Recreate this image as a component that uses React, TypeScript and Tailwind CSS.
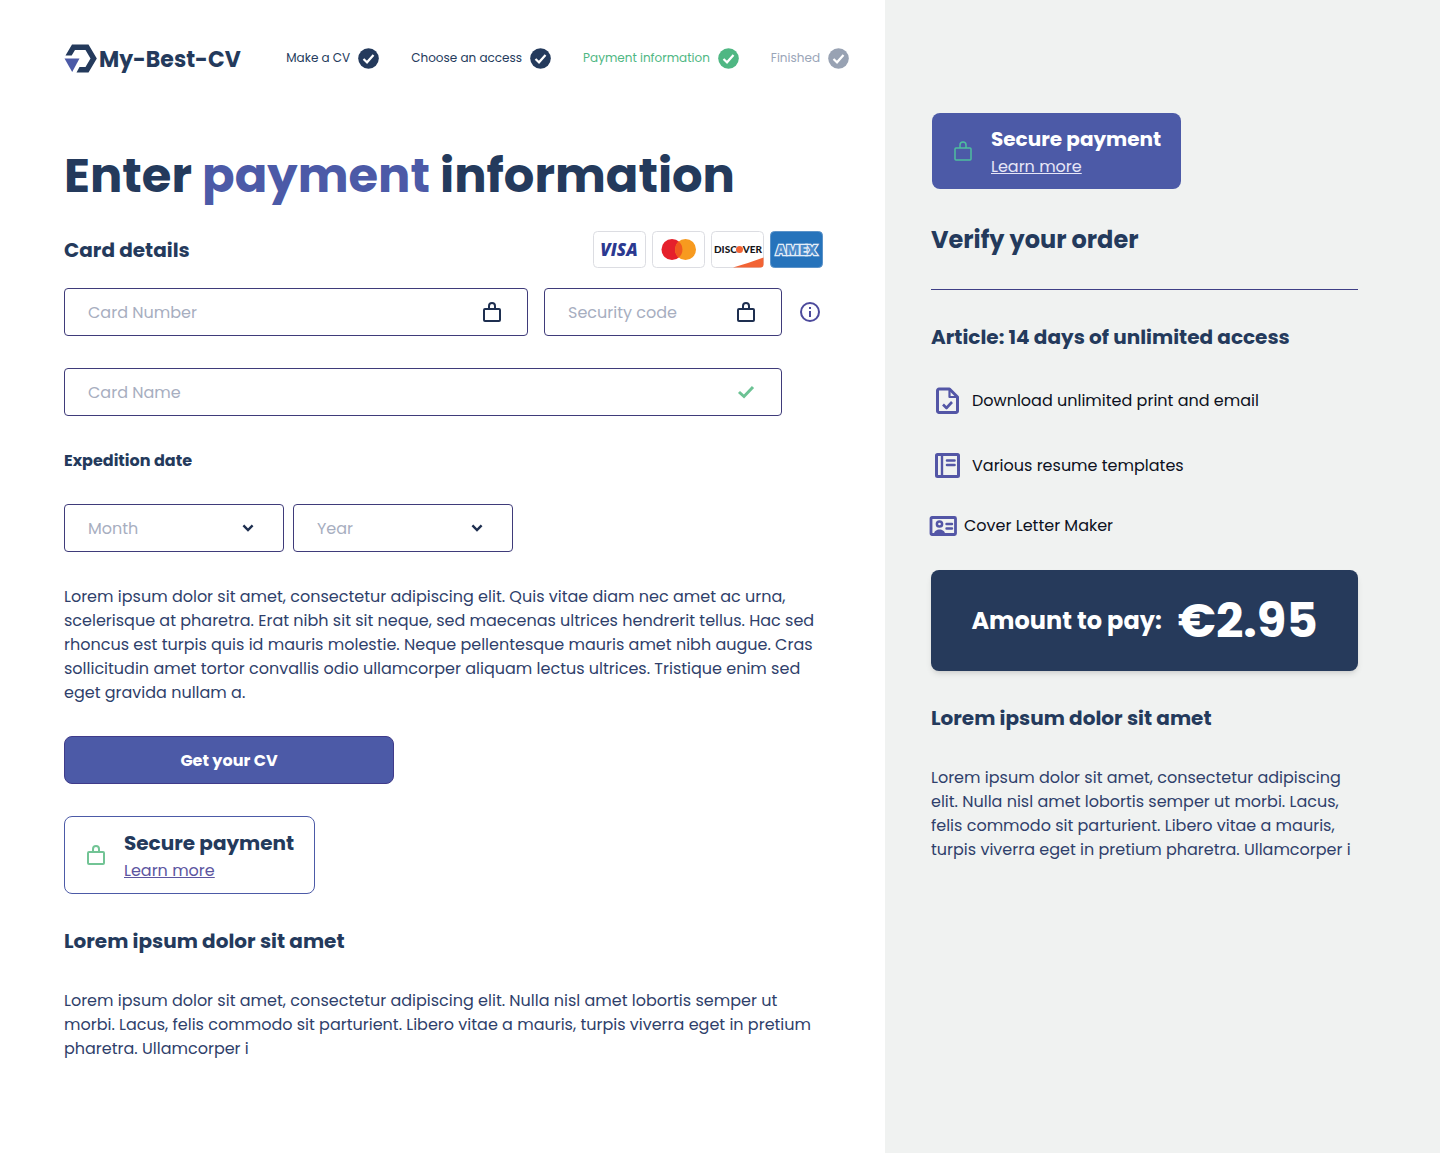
import React from "react";

const steps = [
  { label: "Make a CV", text: "text-[#243a5c]", icon: "text-[#243a5c]" },
  { label: "Choose an access", text: "text-[#243a5c]", icon: "text-[#243a5c]" },
  { label: "Payment information", text: "text-[#4fb783]", icon: "text-[#4fb783]" },
  { label: "Finished", text: "text-[#9aa5b8]", icon: "text-[#98a2b3]" },
];

const LockIcon: React.FC<{ className?: string; strokeWidth?: number }> = ({
  className = "",
  strokeWidth = 2,
}) => (
  <svg
    width="24"
    height="24"
    viewBox="0 0 24 24"
    fill="none"
    stroke="currentColor"
    strokeWidth={strokeWidth}
    strokeLinejoin="round"
    className={`shrink-0 ${className}`}
    aria-hidden="true"
  >
    <rect x="4" y="9" width="16" height="12" rx="1" />
    <path d="M9 9V6a3 3 0 0 1 6 0v3" />
  </svg>
);

const StepCheck: React.FC<{ className: string }> = ({ className }) => (
  <svg width="21" height="21" viewBox="0 0 21 21" className={`shrink-0 ${className}`} aria-hidden="true">
    <circle cx="10.5" cy="10.5" r="10.3" fill="currentColor" />
    <path d="M5.500 11l3.500 3.300L15.500 7" fill="none" stroke="#fff" strokeWidth="2.2" />
  </svg>
);

const Chevron: React.FC = () => (
  <svg
    width="12"
    height="8"
    viewBox="0 0 12 8"
    fill="none"
    stroke="#1e2f50"
    strokeWidth="2.4"
    className="pointer-events-none absolute right-[30px] top-5"
    aria-hidden="true"
  >
    <path d="M1.400 1.400L6 6l4.600-4.600" />
  </svg>
);

const Header: React.FC = () => (
  <header className="flex items-center justify-between pl-16 pr-9 pt-10">
    {/* Logo */}
    <a href="#" className="flex items-center gap-0.5">
      <svg width="33" height="29" viewBox="0 0 33 29" aria-hidden="true">
        <path
          d="M1.500 11.500L8 0.500H24.500L32.800 14.500L24.500 28.500H12.500L15.500 23H21.500L26.500 14.500L21.500 6H11L7.700 11.500Z"
          fill="#243a5c"
        />
        <path d="M.500 14.500H15.500L8.200 28Z" fill="#4c5aa7" />
      </svg>
      <span className="pt-1 text-[22px] leading-8 font-bold text-[#243a5c]">My-Best-CV</span>
    </a>

    {/* Progress */}
    <ol className="flex items-center gap-8">
      {steps.map((step) => (
        <li key={step.label} className="flex items-center gap-2 text-xs">
          <span className={step.text}>{step.label}</span>
          <StepCheck className={step.icon} />
        </li>
      ))}
    </ol>
  </header>
);

const CardLogos: React.FC = () => (
  <div className="flex gap-1.5">
    {/* Visa */}
    <svg width="53" height="37" viewBox="0 0 53 37" role="img" aria-label="Visa">
      <rect x=".5" y=".5" width="52" height="36" rx="4" fill="#fff" stroke="#dcdde2" />
      <text x="26" y="25" textAnchor="middle" fontFamily="Open Sans, sans-serif" fontSize="17" fontWeight="800" fontStyle="italic" fill="#2b3990">
        VISA
      </text>
    </svg>
    {/* Mastercard */}
    <svg width="53" height="37" viewBox="0 0 53 37" role="img" aria-label="Mastercard">
      <rect x=".5" y=".5" width="52" height="36" rx="4" fill="#fff" stroke="#dcdde2" />
      <circle cx="20" cy="18.500" r="10.500" fill="#e5202b" />
      <circle cx="33.500" cy="18.500" r="10.500" fill="#f79a1f" />
      <path d="M26.750 10.500a10.500 10.500 0 0 1 0 16a10.500 10.500 0 0 1 0-16Z" fill="#f0591f" />
    </svg>
    {/* Discover */}
    <svg width="53" height="37" viewBox="0 0 53 37" role="img" aria-label="Discover">
      <rect x=".5" y=".5" width="52" height="36" rx="4" fill="#fff" stroke="#dcdde2" />
      <path d="M22 36.500Q38 32 52.500 26.500V33.500a3 3 0 0 1-3 3Z" fill="#f26334" />
      <g fontFamily="Lato, sans-serif" fontSize="10" fontWeight="900" fill="#16161a">
        <text x="3" y="22">DISC</text>
        <text x="51" y="22" textAnchor="end">VER</text>
      </g>
      <circle cx="28.500" cy="18.500" r="3.500" fill="#f26334" />
    </svg>
    {/* American Express */}
    <svg width="53" height="37" viewBox="0 0 53 37" role="img" aria-label="American Express">
      <rect x=".5" y=".5" width="52" height="36" rx="4" fill="#2673bb" stroke="#5c93c9" />
      <text
        x="26.500"
        y="23.500"
        textAnchor="middle"
        fontFamily="Open Sans, sans-serif"
        fontSize="14"
        fontWeight="800"
        fill="#4b8aca"
        stroke="#e4eef8"
        strokeWidth="2.500"
        paintOrder="stroke"
      >
        AMEX
      </text>
    </svg>
  </div>
);

const SecureBox: React.FC<{ filled?: boolean }> = ({ filled }) => (
  <div
    className={`flex w-fit items-center gap-4 rounded-lg py-[11px] pr-5 pl-[19px] ${
      filled ? "ml-px bg-[#4c5aa7] text-white" : "border border-[#4c5aa7] text-[#243a5c]"
    }`}
  >
    <LockIcon className={filled ? "text-[#4dbf9f]" : "text-[#72c495]"} strokeWidth={filled ? 1.5 : 2} />
    <div>
      <p className="text-xl leading-[30px] font-bold">Secure payment</p>
      <a
        href="#"
        className={`block pt-0.5 text-base leading-[22px] underline ${filled ? "text-[#e6e6f7]" : "text-[#5c55a0]"}`}
      >
        Learn more
      </a>
    </div>
  </div>
);

const field = "flex h-12 items-center rounded border border-[#3f3b7a] px-[23px]";
const input = "w-full min-w-0 bg-transparent pt-0.5 text-base text-[#243a5c] outline-none placeholder:text-[#a7aebf]";
const select =
  "h-12 w-full appearance-none rounded border border-[#3f3b7a] bg-white pt-0.5 pl-[23px] text-base text-[#a7aebf]";

const PaymentForm: React.FC = () => (
  <form>
    <div className="mt-[19px] flex items-center justify-between">
      <h2 className="text-xl font-bold">Card details</h2>
      <CardLogos />
    </div>

    {/* Card fields */}
    <div className="mt-5 grid grid-cols-[464fr_238fr_25px] gap-x-4 gap-y-8">
      <label className={field}>
        <input className={input} type="text" placeholder="Card Number" aria-label="Card Number" />
        <LockIcon className="text-[#1e2f50]" />
      </label>
      <label className={field}>
        <input className={input} type="text" placeholder="Security code" aria-label="Security code" />
        <LockIcon className="text-[#1e2f50]" />
      </label>
      <button type="button" aria-label="About the security code" className="flex items-center pl-px">
        <svg width="22" height="22" viewBox="0 0 22 22" fill="none" stroke="#4c4a9c" strokeWidth="2">
          <circle cx="11" cy="11" r="9" />
          <path d="M11 10v6M11 6v2" />
        </svg>
      </button>
      <label className={`${field} col-span-2`}>
        <input className={input} type="text" placeholder="Card Name" aria-label="Card Name" />
        <svg width="24" height="24" viewBox="0 0 24 24" fill="none" stroke="#6cc294" strokeWidth="3" className="shrink-0" aria-hidden="true">
          <path d="M5 12l5 4.500L19 7" />
        </svg>
      </label>
    </div>

    {/* Expiry */}
    <h3 className="mt-[33px] text-base leading-6 font-bold">Expedition date</h3>
    <div className="mt-[31px] flex gap-[9px]">
      <div className="relative w-[220px]">
        <select className={select} aria-label="Month">
          <option>Month</option>
        </select>
        <Chevron />
      </div>
      <div className="relative w-[220px]">
        <select className={select} aria-label="Year">
          <option>Year</option>
        </select>
        <Chevron />
      </div>
    </div>

    <p className="mt-[33px] text-base leading-6 text-[#2f3f6b]">
      Lorem ipsum dolor sit amet, consectetur adipiscing elit. Quis vitae diam nec amet ac urna, scelerisque at
      pharetra. Erat nibh sit sit neque, sed maecenas ultrices hendrerit tellus. Hac sed rhoncus est turpis quis id
      mauris molestie. Neque pellentesque mauris amet nibh augue. Cras sollicitudin amet tortor convallis odio
      ullamcorper aliquam lectus ultrices. Tristique enim sed eget gravida nullam a.
    </p>

    <button
      type="submit"
      className="mt-[31px] h-12 w-[330px] rounded-lg border border-[#3f3b8a] bg-[#4c5aa7] pt-0.5 text-base font-bold text-white"
    >
      Get your CV
    </button>
  </form>
);

const Summary: React.FC = () => (
  <aside className="bg-[#f0f2f1] pt-[113px] pr-[82px] pl-[46px] text-[#243a5c]">
    <SecureBox filled />
    <h2 className="mt-[33px] border-b border-[#3f3f86] pb-[31px] text-2xl leading-9 font-bold">Verify your order</h2>
    <h3 className="mt-8 text-xl leading-[30px] font-bold">Article: 14 days of unlimited access</h3>

    {/* What is included */}
    <ul className="mt-8 text-base text-[#0c1020]">
      <li className="flex h-[33px] items-center gap-3">
        <svg width="29" height="30" viewBox="0 0 29 30" fill="none" stroke="#5356a6" strokeWidth="3" strokeLinejoin="round" aria-hidden="true">
          <path d="M18.500 3H8a1.500 1.500 0 0 0-1.500 1.500V25A1.500 1.500 0 0 0 8 26.500H25A1.500 1.500 0 0 0 26.500 25V11Z" />
          <path d="M18.500 3V11H26.500" strokeWidth="2.200" />
          <path d="M12 18.500l3.500 3.500 5.500-6" strokeWidth="2.600" />
        </svg>
        Download unlimited print and email
      </li>
      <li className="mt-8 flex h-[33px] items-center gap-3">
        <svg width="29" height="28" viewBox="0 0 29 28" fill="none" stroke="#5356a6" strokeWidth="3" strokeLinejoin="round" aria-hidden="true">
          <rect x="5.500" y="2.500" width="22" height="22" rx="1" />
          <path d="M11 3v22" strokeWidth="2.400" />
          <path d="M16 8.500h7.500M16 13h7.500" strokeWidth="2.600" strokeLinecap="round" />
        </svg>
        Various resume templates
      </li>
      <li className="mt-7 flex h-8 items-center gap-[7px]">
        <svg width="26" height="22" viewBox="0 0 26 22" className="overflow-visible" fill="none" stroke="#5356a6" strokeWidth="2.800" strokeLinejoin="round" aria-hidden="true">
          <rect x="0" y="2.500" width="24.500" height="17" rx="1" />
          <circle cx="8.500" cy="9" r="2.600" strokeWidth="2.500" />
          <path d="M3 19c0-6 11-6 11 0Z" fill="#5356a6" stroke="none" />
          <path d="M15.500 9H21M15.500 13.500H21" strokeWidth="2.400" strokeLinecap="round" />
        </svg>
        Cover Letter Maker
      </li>
    </ul>

    {/* Total */}
    <div className="mt-7 flex h-[101px] items-center justify-center gap-4 rounded-lg bg-[#263a5b] whitespace-nowrap text-white shadow-md">
      <span className="text-2xl font-bold">Amount to pay:</span>
      <strong className="text-5xl font-bold">€2.95</strong>
    </div>

    <h3 className="mt-8 text-xl leading-[30px] font-bold">Lorem ipsum dolor sit amet</h3>
    <p className="mt-[33px] text-base leading-6 text-[#2f3f6b]">
      Lorem ipsum dolor sit amet, consectetur adipiscing elit. Nulla nisl amet lobortis semper ut morbi. Lacus, felis
      commodo sit parturient. Libero vitae a mauris, turpis viverra eget in pretium pharetra. Ullamcorper i
    </p>
  </aside>
);

const App: React.FC = () => {
  return (
    <div className="grid min-h-screen grid-cols-[885fr_555fr] bg-white font-['Poppins','Inter',sans-serif]">
      <div className="pb-16">
        <Header />
        <main className="pl-16 pr-[62px] pt-16 text-[#243a5c]">
          <h1 className="text-5xl leading-[72px] font-bold">
            Enter <span className="text-[#4c5aa7]">payment</span> information
          </h1>
          <PaymentForm />
          <div className="mt-8">
            <SecureBox />
          </div>
          <h2 className="mt-8 text-xl leading-[30px] font-bold">Lorem ipsum dolor sit amet</h2>
          <p className="mt-[33px] text-base leading-6 text-[#2f3f6b]">
            Lorem ipsum dolor sit amet, consectetur adipiscing elit. Nulla nisl amet lobortis semper ut morbi. Lacus,
            felis commodo sit parturient. Libero vitae a mauris, turpis viverra eget in pretium pharetra. Ullamcorper i
          </p>
        </main>
      </div>
      <Summary />
    </div>
  );
};

export default App;
